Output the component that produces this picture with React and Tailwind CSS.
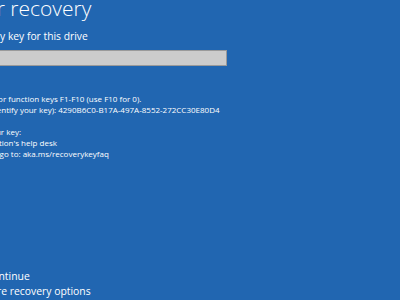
import React from 'react';

const App = () => {
    return (
        <div className="w-[400px] h-[300px] overflow-hidden bg-[#2166b1] text-white font-['Open_Sans','Noto_Sans',sans-serif]">
            <div className="ml-[-83px] h-full flex flex-col whitespace-nowrap">
                <h1 className="mt-[-2px] text-[21px] leading-[21px] font-light">BitLocker recovery</h1>
                <p className="mt-[12px] text-[10.3px] leading-[11px]">Enter the recovery key for this drive</p>
                <div className="mt-[8px] w-[310px] h-[16px] bg-[#cccccc] border border-[#9a9a9a]"></div>

                <div className="mt-[27px] text-[8px] leading-[11px]">
                    <p>Use the number keys or function keys F1-F10 (use F10 for 0).</p>
                    <p>Recovery key ID (to identify your key): 4290B6C0-B17A-497A-8552-272CC30E80D4</p>
                </div>

                <div className="mt-[11px] text-[8px] leading-[11px]">
                    <p>Here's how to find your key:</p>
                    <p>Contact your organization's help desk</p>
                    <p>For more information go to: aka.ms/recoverykeyfaq</p>
                </div>

                <div className="mt-auto pb-[1px] text-[10.4px] leading-[15px]">
                    <p>Press Enter to continue</p>
                    <p>Press Esc for more recovery options</p>
                </div>
            </div>
        </div>
    );
};

export default App;
